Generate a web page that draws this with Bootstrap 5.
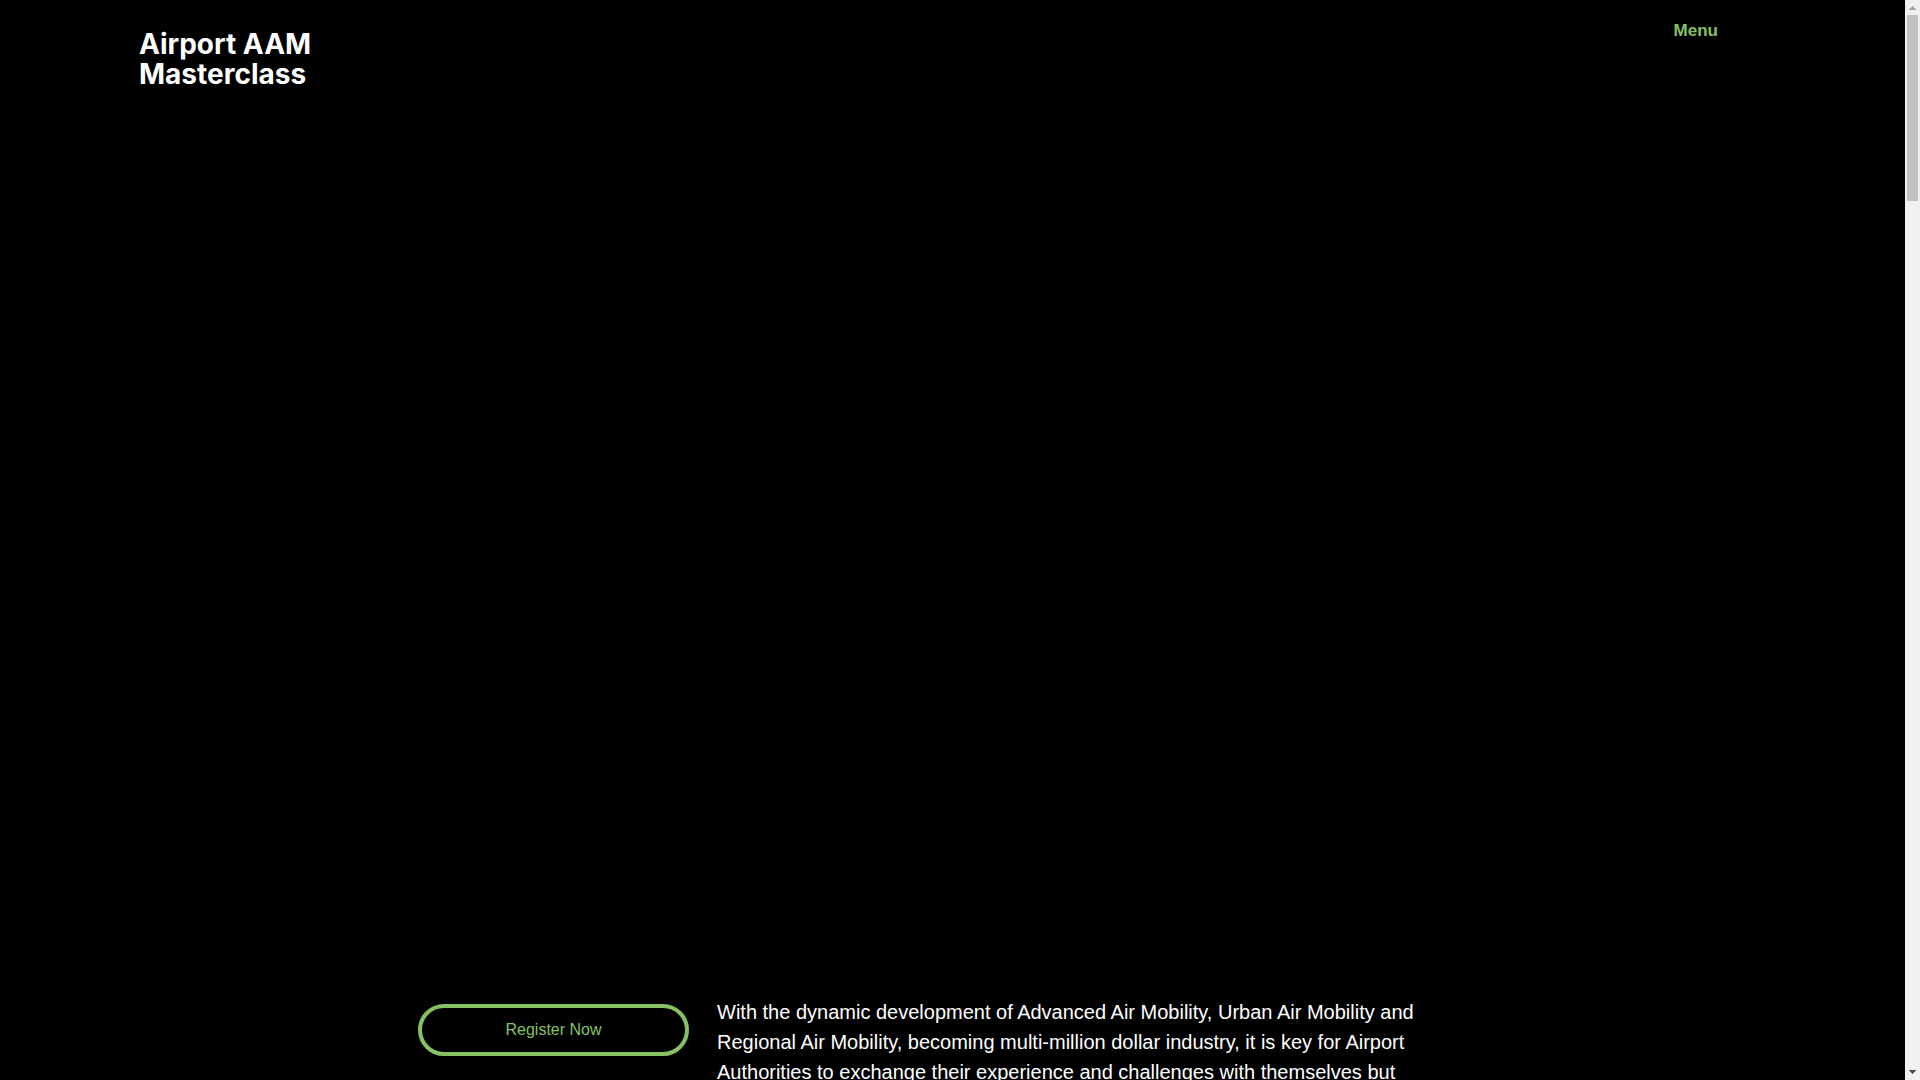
<!DOCTYPE html>
<html lang="en">
<head>
<meta charset="utf-8">
<meta name="viewport" content="width=device-width, initial-scale=1">
<title>Airport AAM Masterclass</title>
<link href="https://cdn.jsdelivr.net/npm/bootstrap@5.3.0/dist/css/bootstrap.min.css" rel="stylesheet">
<style>
  body { background: #000; color: #fff; font-family: "Liberation Sans", Arial, sans-serif; }
  .page-view { height: 100vh; }
  .hero { min-height: calc(100vh - 83px); padding: 0 187px 0 139px; }
  .site-logo { font: 700 28px/30px Inter, sans-serif; color: #fff; padding-top: 29px; }
  .menu-link { font-size: 17px; line-height: 20px; font-weight: 700; color: #86c264; padding-top: 21px; }
  .intro { max-width: 1069px; gap: 28px; }
  .btn-register { --bs-btn-color: #86c264; --bs-btn-border-color: #86c264; --bs-btn-border-width: 4px;
    --bs-btn-hover-color: #000; --bs-btn-hover-bg: #86c264; --bs-btn-line-height: 24px;
    width: 271px; height: 52px; margin-top: 7px; }
  .intro-text { font-size: 20px; line-height: 30px; max-width: 720px; }
  .scroll-track { width: 15px; background: #f0f0f0; padding: 0 2px; }
  .scroll-arrow { height: 15px; }
  .scroll-thumb { height: 186px; background: #c1c1c1; }
</style>
<script defer src="https://cdn.jsdelivr.net/npm/bootstrap@5.3.0/dist/js/bootstrap.bundle.min.js"></script>
</head>
<body>
<div class="page-view d-flex overflow-hidden">
  <div class="flex-grow-1">
    <header class="hero d-flex justify-content-between align-items-start">
      <a class="site-logo text-decoration-none" href="#">Airport AAM<br>Masterclass</a>
      <a class="menu-link text-decoration-none" href="#">Menu</a>
    </header>
    <main class="intro d-flex mx-auto">
      <a class="btn btn-register rounded-pill flex-shrink-0 d-flex align-items-center justify-content-center" href="#">Register Now</a>
      <p class="intro-text mb-0">With the dynamic development of Advanced Air Mobility, Urban Air Mobility and Regional Air Mobility, becoming multi-million dollar industry, it is key for Airport Authorities to exchange their experience and challenges with themselves but</p>
    </main>
  </div>
  <div class="scroll-track flex-shrink-0 d-flex flex-column" aria-hidden="true">
    <svg class="scroll-arrow" viewBox="0 0 11 15" shape-rendering="crispEdges"><path d="M2 10h7v-1h-1v-1h-1v-1h-1v-1h-1v1h-1v1h-1v1h-1z" fill="#a3a3a3"/></svg>
    <div class="scroll-thumb"></div>
    <svg class="scroll-arrow mt-auto" viewBox="0 0 11 15" shape-rendering="crispEdges"><path d="M2 5h7v1h-1v1h-1v1h-1v1h-1v-1h-1v-1h-1v-1h-1z" fill="#505050"/></svg>
  </div>
</div>
</body>
</html>
